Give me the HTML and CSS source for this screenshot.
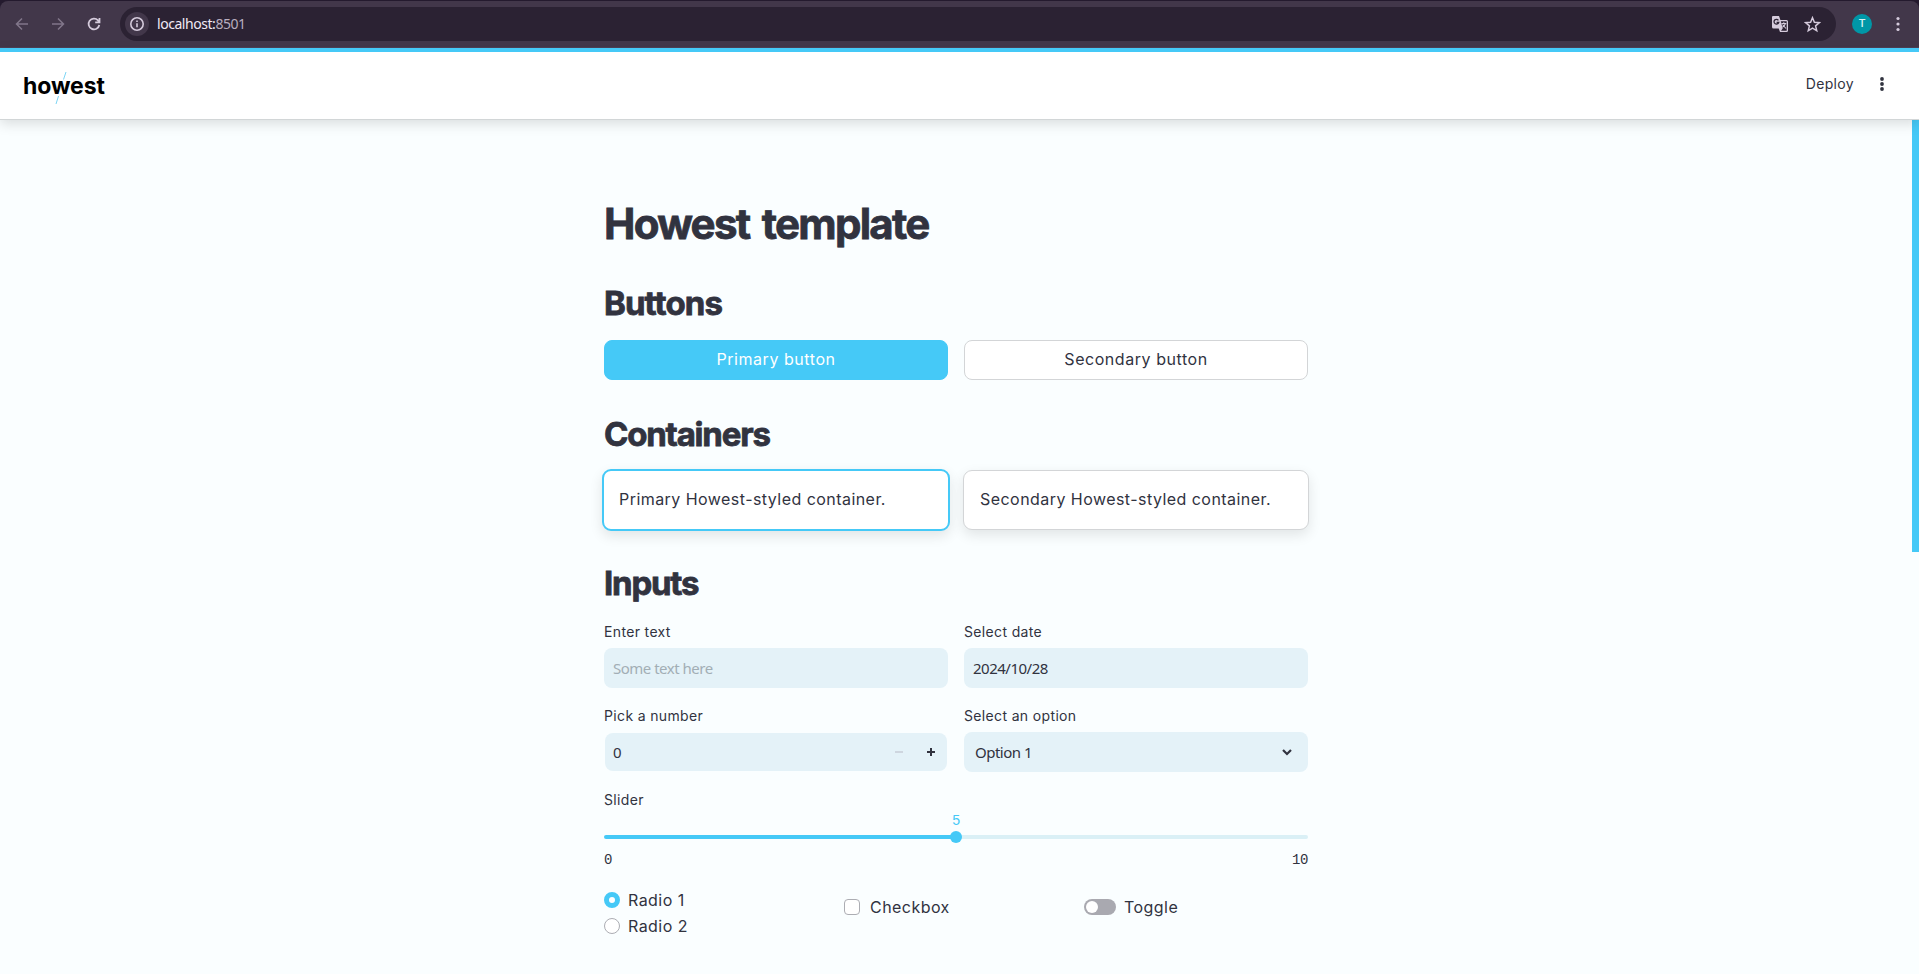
FILE: index.html
```html
<!DOCTYPE html>
<html lang="en">
<head>
<meta charset="utf-8">
<title>Howest template</title>
<link rel="stylesheet" href="styles.css">
</head>
<body>
<div class="browser">
  <div class="toolbar">
    <svg class="nav dim" viewBox="0 0 16 16"><path d="M14 8H3M8 2.500 2.500 8 8 13.500"/></svg>
    <svg class="nav dim" viewBox="0 0 16 16"><path d="M2 8h11M8 2.500 13.500 8 8 13.500"/></svg>
    <svg class="nav" viewBox="0 0 16 16"><path class="thick" d="M13.300 9A5.400 5.400 0 1 1 12 4.300L13.500 6M13.500 2v4.300H9.200"/></svg>
    <div class="address">
      <span class="site"><svg viewBox="0 0 16 16"><circle cx="8" cy="8" r="6.200"/><path d="M8 7.200v4M8 4.600v1.500"/></svg></span>
      <span class="url">localhost:<i>8501</i></span>
      <svg class="translate" viewBox="0 0 18 18"><path class="solid" d="M1.500 1H8l1.400 4H15.500Q17 5 17 6.500V15.500Q17 17 15.500 17H9l-1.300-3.500H2.500Q1 13.500 1 12V2Q1 1 2 1Z"/><path class="hole" d="M9.800 6.300h5.900v9.400H10l1.700-2.100Z"/><path class="g" d="M7.400 5.300A2.400 2.400 0 1 0 7.700 7.500H5.600"/><path class="x" d="M10.500 8.500h4.800M12.800 7.200v1.300M14.300 8.700Q13.500 11 11.400 12.300M11.500 9.500l3.500 4"/></svg>
      <svg class="star" viewBox="0 0 16 16"><path d="m8 1.600 1.800 4.300 4.700.4-3.600 3 1.100 4.600L8 11.500l-4 2.400 1.100-4.600-3.600-3 4.700-.4Z"/></svg>
    </div>
    <span class="avatar">T</span>
    <svg class="kebab" viewBox="0 0 4 16"><circle cx="2" cy="2.500" r="1.600"/><circle cx="2" cy="8" r="1.600"/><circle cx="2" cy="13.500" r="1.600"/></svg>
  </div>
</div>
<header class="header">
  <div class="logo"><span>howest</span>
    <svg viewBox="0 0 12 34"><path d="M11 1 8.500 8.500M3.500 25 1 33"/></svg>
  </div>
  <span class="deploy">Deploy</span>
  <svg class="menu" viewBox="0 0 4 14"><circle cx="2" cy="2" r="1.900"/><circle cx="2" cy="7" r="1.900"/><circle cx="2" cy="12" r="1.900"/></svg>
</header>
<div class="view">
  <main class="content">
    <h1>Howest template</h1>
    <h2 class="h-buttons">Buttons</h2>
    <div class="row">
      <button class="btn primary">Primary button</button>
      <button class="btn">Secondary button</button>
    </div>
    <h2 class="h-containers">Containers</h2>
    <div class="row cards">
      <div class="card primary-card">Primary Howest-styled container.</div>
      <div class="card">Secondary Howest-styled container.</div>
    </div>
    <h2 class="h-inputs">Inputs</h2>
    <div class="row">
      <div class="field"><label>Enter text</label><div class="input placeholder">Some text here</div></div>
      <div class="field"><label>Select date</label><div class="input">2024/10/28</div></div>
    </div>
    <div class="row second">
      <div class="field"><label>Pick a number</label>
        <div class="input number"><span>0</span>
          <svg class="minus" viewBox="0 0 8 8"><path d="M0 4h8"/></svg>
          <svg class="plus" viewBox="0 0 8 8"><path d="M0 4h8M4 0v8"/></svg>
        </div>
      </div>
      <div class="field"><label>Select an option</label>
        <div class="input select"><span>Option 1</span>
          <svg class="chevron" viewBox="0 0 10 7"><path d="m1 1 4 4 4-4"/></svg>
        </div>
      </div>
    </div>
    <div class="slider">
      <label>Slider</label>
      <div class="value">5</div>
      <div class="track"><span class="thumb"></span></div>
      <div class="ticks"><span>0</span><span>10</span></div>
    </div>
    <div class="choices">
      <div class="radios">
        <div class="choice"><span class="radio on"></span>Radio 1</div>
        <div class="choice"><span class="radio"></span>Radio 2</div>
      </div>
      <div class="choice single"><span class="check"></span>Checkbox</div>
      <div class="choice single toggle-choice"><span class="toggle"></span>Toggle</div>
    </div>
  </main>
  <div class="scrollbar"></div>
</div>
</body>
</html>
```
FILE: styles.css
```css
* { box-sizing: border-box; }
body {
  margin: 0;
  height: 974px;
  overflow: hidden;
  display: flex;
  flex-direction: column;
  background: #fafeff;
  color: #31333f;
  font: 16px/24px Inter, sans-serif;
  letter-spacing: .45px;
}
svg { display: block; fill: none; stroke: currentColor; flex: none; }

.browser { height: 48px; flex: none; background: #241a2e; padding-top: 1px; }
.toolbar {
  height: 47px;
  padding: 0 17px 0 14px;
  display: flex;
  align-items: center;
  background: #42374a;
  border-radius: 8px 8px 0 0;
  border-bottom: 1px solid #4d4057;
  color: #d5cbdc;
}
.nav { width: 16px; height: 16px; margin-right: 20px; stroke-width: 1.5; }
.nav .thick { stroke-width: 1.800; }
.dim { color: #81768a; }
.address {
  height: 34px;
  width: 1716px;
  margin-left: -2px;
  padding: 0 15px 0 5px;
  display: flex;
  align-items: center;
  border-radius: 17px;
  background: #2b2233;
}
.site { width: 24px; height: 24px; border-radius: 50%; background: #42374a; display: grid; place-items: center; }
.site svg { width: 16px; height: 16px; stroke-width: 1.600; }
.url { margin: 0 auto 0 8px; font: 14px/20px "Noto Sans", sans-serif; letter-spacing: -.45px; color: #f0e9f4; }
.url i { font-style: normal; color: #b8adbf; }
.translate { width: 18px; height: 18px; margin-right: 15px; }
.translate .solid { fill: currentColor; stroke: none; }
.translate .hole { fill: #2b2233; stroke: none; }
.translate .g { stroke: #2b2233; stroke-width: 1.300; }
.translate .x { stroke-width: 1.100; }
.star { width: 17px; height: 17px; stroke-width: 1.400; }
.avatar {
  width: 20px; height: 20px;
  margin-left: 16px;
  border-radius: 50%;
  background: #0097a7;
  color: #d7f1f3;
  font: 500 11px/20px Roboto, sans-serif;
  letter-spacing: 0;
  text-align: center;
}
.kebab { width: 4px; height: 16px; margin-left: 24px; fill: currentColor; stroke: none; }

.header {
  height: 72px;
  flex: none;
  position: relative;
  display: flex;
  align-items: center;
  padding: 0 35px 4px 23px;
  background: #fff;
  border-top: 4px solid #45c9f7;
  border-bottom: 1px solid #d2d6d7;
  box-shadow: 0 4px 12px rgba(0, 0, 0, .13);
}
.logo {
  position: relative;
  margin: 4px auto 0 0;
  color: #000;
  font: 700 23px/30px Inter, sans-serif;
  letter-spacing: -.1px;
}
.logo svg { position: absolute; left: 32px; top: 0; width: 12px; height: 34px; color: #7cd5f5; }
.deploy { font-size: 14px; letter-spacing: .35px; }
.menu { width: 4px; height: 14px; margin-left: 26px; fill: currentColor; stroke: none; }

.view { flex: 1; display: flex; }
.content { width: 704px; margin-left: 604px; }
.scrollbar { width: 7px; height: 432px; margin-left: auto; background: #45c9f7; }

h1, h2 { margin: 0; font-weight: 700; -webkit-text-stroke: .8px #31333f; stroke-linejoin: round; }
h1 { padding: 78px 0 0; font-size: 42px; line-height: 52px; letter-spacing: -1.700px; word-spacing: 4px; }
h2 { height: 40px; font-size: 33px; line-height: 39px; letter-spacing: -1.200px; }
.h-buttons { margin: 34px 0 16px; letter-spacing: -.9px; }
.h-containers { margin: 35px 0 14px; }
.h-inputs { margin: 33px 0 16px; }

.row { display: grid; grid-template-columns: 344px 344px; gap: 16px; }
.btn {
  height: 40px;
  padding: 0 0 2px;
  border: 1px solid #d3d5d7;
  border-radius: 8px;
  background: #fff;
  color: inherit;
  font: inherit;
  letter-spacing: .55px;
}
.primary { background: #45c9f7; border-color: #45c9f7; color: #fff; }
.cards { height: 62px; margin: 0 -2px; grid-template-columns: 348px 346px; gap: 13px; align-items: center; }
.card {
  height: 60px;
  padding: 16px;
  border: 1px solid #d3d5d7;
  border-radius: 9px;
  background: #fff;
  box-shadow: 0 5px 13px rgba(0, 0, 0, .1);
}
.primary-card { height: 62px; padding-left: 15px; border: 2px solid #45c9f7; }

label { display: block; height: 28px; font-size: 14px; line-height: 24px; letter-spacing: .35px; }
.input {
  height: 40px;
  padding: 0 9px;
  display: flex;
  align-items: center;
  border-radius: 8px;
  background: #e4f2f8;
  font: 15px/24px "Noto Sans", sans-serif;
  letter-spacing: -.5px;
}
.placeholder { color: #a2aeb5; }
.second { margin-top: 16px; }
.number { height: 38px; margin: 1px; padding: 0 12px 0 8px; }
.number span, .select span { margin-right: auto; }
.minus, .plus { width: 8px; height: 8px; stroke-width: 2; }
.minus { color: #ced6df; margin-right: 24px; }
.select { padding: 0 16px 0 11px; }
.chevron { width: 10px; height: 7px; stroke-width: 2.200; }

.slider { height: 99px; margin-top: 16px; }
.slider label { height: 24px; }
.value, .ticks { font: 14px/18px "Liberation Mono", monospace; letter-spacing: -.4px; }
.value { text-align: center; color: #45c9f7; height: 23px; }
.track {
  height: 4px;
  border-radius: 2px;
  position: relative;
  background: linear-gradient(90deg, #45c9f7 50%, #daf0f6 50%);
}
.thumb { position: absolute; left: 346px; top: -4px; width: 12px; height: 12px; border-radius: 50%; background: #45c9f7; }
.ticks { display: flex; justify-content: space-between; margin-top: 12px; }

.choices { display: grid; grid-template-columns: 240px 240px 224px; }
.choice { height: 26px; display: flex; align-items: center; gap: 8px; }
.single { margin-top: 7px; gap: 10px; }
.toggle-choice { gap: 8px; }
.radio, .check { width: 16px; height: 16px; border: 1px solid #acadb3; background: #fff; }
.radio { border-radius: 50%; }
.on { border: 5px solid #45c9f7; }
.check { border-radius: 4px; }
.toggle { width: 32px; height: 16px; padding: 2px; border-radius: 8px; background: #a9a9b0; }
.toggle::before { content: ""; display: block; width: 12px; height: 12px; border-radius: 50%; background: #fff; }
```
